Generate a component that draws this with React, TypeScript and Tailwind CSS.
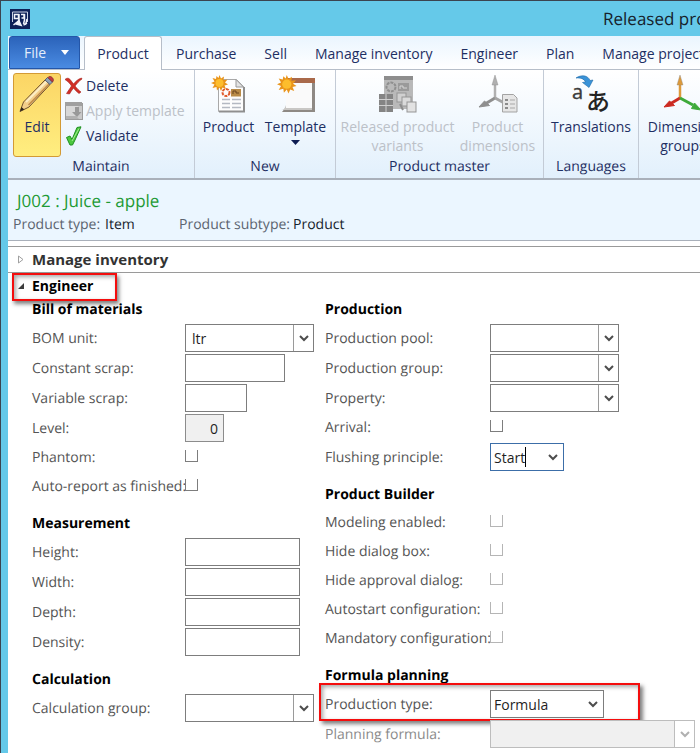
import type { ReactNode } from "react";

const TABS = ["Purchase", "Sell", "Manage inventory", "Engineer", "Plan", "Manage projects"];

function AppLogo() {
  return (
    <svg width="20" height="20" viewBox="0 0 20 20">
      <rect width="20" height="20" fill="#0e2158" />
      <path d="M2.500 13V3h15v10" fill="none" stroke="#c9d1e4" strokeWidth="1" />
      <path d="M4.500 5.500h4v4h-4zM9 5v6.500L3.500 16" fill="none" stroke="#f0f3fa" strokeWidth="1.500" />
      <path d="M9 10l3.500 7.500L5 15.500z" fill="#f0f3fa" />
      <path d="M11 5.500h3v3.500h-2.500M14.500 5v6l-1 4M17 10l-1.500 6M13.500 16l3.500-2" fill="none" stroke="#f0f3fa" strokeWidth="1.500" />
    </svg>
  );
}

function PencilIcon() {
  return (
    <svg width="38" height="38" viewBox="0 0 38 38">
      <path d="M2 36.500L5.500 27 27 5l5 4.500L11 32z" fill="#f3cf8b" stroke="#70532f" />
      <path d="M8 27L28.500 6.500" stroke="#fdeec6" strokeWidth="2" />
      <path d="M10.500 30L31 9" stroke="#c08a4a" strokeWidth="1.500" />
      <path d="M27 5l2.500-2.500 5 4.500L32 9.500z" fill="#8fa0b4" stroke="#5b6472" />
      <path d="M30 2.500C32-.5 37.500 4 34.500 7z" fill="#c63a3d" stroke="#7d2c30" strokeWidth=".8" />
      <path d="M2 36.500l1.500-4.500 2.800 2.500z" fill="#30261c" />
    </svg>
  );
}

function DeleteIcon() {
  return (
    <svg width="18" height="18" viewBox="0 0 18 18">
      <path d="M0 2.500C2 .5 4 1 5.500 3L8.500 7c2-2.500 4.500-5 8-6l.5 1C14 4 12 6.500 10 9c2 2.500 4 4.500 6 6l-2 1.500c-2-1.500-4-3.500-5.500-5.500-1.500 2-3 4-4 6L1.500 16.500C3 14 5 11.500 6.500 9 5 6.500 3 4.500 0 2.500z" fill="#d12f26" stroke="#a51e19" strokeWidth=".6" />
    </svg>
  );
}

function ApplyTemplateIcon() {
  return (
    <svg width="18" height="18" viewBox="0 0 18 18">
      <rect x=".5" y="1.500" width="17" height="16" fill="#c9c9c9" stroke="#9c9c9c" />
      <rect x="0" y="0" width="17" height="4" fill="#a0a0a0" />
      <rect x="1" y="4" width="12" height="10" fill="#d8d8d8" />
      <path d="M10 5h4v5h2.500L12 15l-5-5h3z" fill="#999" />
      <path d="M1 17v-3h10l3 3z" fill="#b2b2b2" />
    </svg>
  );
}

function ValidateIcon() {
  return (
    <svg width="18" height="20" viewBox="0 0 18 20">
      <path d="M1.500 11.500l3.500-1.500 2 3.500L12 1.500 16 .8 10 14l-2.500 5H5z" fill="#4cc83f" stroke="#1f8f22" />
      <path d="M7 15L14 2.500" stroke="#a5ee90" />
    </svg>
  );
}

function Burst() {
  return (
    <g>
      <path d="M8.500 0l1.500 3.500 3-2-.5 3.500 4-.5-2.500 3 3 2-3.500 1 1.500 3.500-3.500-1.500L10 16l-1.500-3.500L6 15.500l-.5-3.500-4 1 2-3.500L0 8l3.500-1.500L1.500 3 5 4l.5-3L7.500 3z" fill="#e9941a" />
      <circle cx="8.500" cy="8" r="4" fill="#fdbd2c" />
    </g>
  );
}

function NewProductIcon() {
  return (
    <svg width="36" height="38" viewBox="0 0 36 38">
      <path d="M7.500 4.500h18l7 7v25h-25z" fill="#fdfdfd" stroke="#a9a9a9" />
      <path d="M8 36.500h25V12" fill="none" stroke="#8f8f8f" strokeWidth="2" />
      <path d="M25 4.500v7.500h7.500z" fill="#e3e3e3" stroke="#999" />
      <circle cx="15" cy="17.500" r="3.500" fill="none" stroke="#df5a2b" strokeWidth="2" strokeDasharray="3 1" />
      <rect x="20" y="14" width="10" height="7.500" fill="#b98b48" />
      <path d="M22 19v-3h3v2h3" fill="none" stroke="#684520" />
      <path d="M11 24.500h8M21 24.500h9M11 28.500h8M21 28.500h9M11 32.500h8M21 32.500h9" stroke="#b4b9c2" strokeWidth="1.500" />
      <Burst />
    </svg>
  );
}

function TemplateIcon() {
  return (
    <svg width="40" height="38" viewBox="0 0 40 38">
      <path d="M10 4h29v33H6l4-5z" fill="#8e8984" />
      <rect x="10" y="3" width="29" height="5" fill="#a9694a" />
      <path d="M10 8h26v25H10z" fill="#fafafa" />
      <path d="M5 35c3 0 4-2 5-5v3h26v2z" fill="#c9c7c4" />
      <g transform="translate(1 0) scale(1.150)">
        <Burst />
      </g>
    </svg>
  );
}

function VariantsIcon() {
  return (
    <svg width="40" height="38" viewBox="0 0 40 38">
      <rect x="6" y="1" width="29" height="33" fill="#b9b9b9" />
      <rect x="6" y="1" width="29" height="4" fill="#8d8d8d" />
      <circle cx="13" cy="12" r="4.500" fill="none" stroke="#8f8f8f" strokeWidth="2" strokeDasharray="3 1" />
      <rect x="20" y="8" width="11" height="8" fill="#9a9a9a" />
      <path d="M22 14v-3h3v2h4" fill="none" stroke="#d5d5d5" />
      <rect x="1" y="19" width="14" height="18" fill="#848484" />
      <path d="M1 24.500h14M1 30.500h14M8 19v18" stroke="#cfcfcf" />
      <rect x="19" y="18" width="9" height="9" fill="#d0d0d0" stroke="#959595" />
      <rect x="24" y="22" width="9" height="9" fill="#dadada" stroke="#959595" />
      <rect x="29" y="27" width="9" height="10" fill="#e2e2e2" stroke="#959595" />
      <path d="M22 29l3 6" stroke="#8d8d8d" strokeWidth="2" />
    </svg>
  );
}

type AxesProps = { up: string; left: string; right: string; list?: boolean };

function AxesIcon({ up, left, right, list }: AxesProps) {
  return (
    <svg width="40" height="38" viewBox="0 0 40 38">
      <path d="M17 24V8" stroke={up} strokeWidth="2.500" />
      <path d="M17 0l3 10h-6z" fill={up} stroke="#8b8b8b" strokeWidth=".4" />
      <path d="M17 23L7 29" stroke={left} strokeWidth="3" />
      <path d="M1 32l5.500-6 5 4.500z" fill={left} stroke={left} />
      <path d="M17 23l13 7" stroke={right} strokeWidth="3" />
      <path d="M38 35l-9.500-1.500 3-5.500z" fill={right} stroke={right} />
      {list && (
        <g>
          <path d="M24.500 19.500h11l3.500 3.500v14H24.500z" fill="#e6e6e6" stroke="#a3a3a3" />
          <path d="M27 25h3M27 29h3M27 33h3" stroke="#8b8b8b" strokeWidth="2" />
          <path d="M32 25h5M32 29h5M32 33h5" stroke="#a8a8a8" />
        </g>
      )}
    </svg>
  );
}

function TranslationsIcon() {
  return (
    <svg width="40" height="38" viewBox="0 0 40 38">
      <text x="1" y="24" fontSize="20" fill="#3c3c3c" stroke="#3c3c3c" strokeWidth=".4" fontFamily="'Open Sans', sans-serif">a</text>
      <text x="15" y="35" fontSize="24" fontWeight="500" fill="#242424" fontFamily="'Noto Sans CJK JP', sans-serif">あ</text>
      <path d="M5 3C10-.5 17 0 19 5.500l3-.5-4 7.500-6.500-5 3-.5C13 3.500 9 2.500 5 3z" fill="#3a93d8" stroke="#1f6aa8" strokeWidth=".6" />
    </svg>
  );
}

function RibbonGroup({ label, className, children }: { label: string; className: string; children: ReactNode }) {
  return (
    <section className={`flex shrink-0 flex-col border-r border-[#c3cbd6] ${className}`}>
      <div className="flex h-[87px]">{children}</div>
      <h2 className="text-center leading-5">{label}</h2>
    </section>
  );
}

type BigButtonProps = { icon: ReactNode; lines: string[]; className: string; disabled?: boolean; menu?: boolean };

function BigButton({ icon, lines, className, disabled, menu }: BigButtonProps) {
  return (
    <button
      disabled={disabled}
      className={`flex shrink-0 flex-col items-center pt-[5px] disabled:text-[#bcc1c8] ${className}`}
    >
      {icon}
      <span className="mt-1 flex flex-col whitespace-nowrap leading-[19px]">
        {lines.map((line) => (
          <span key={line}>{line}</span>
        ))}
      </span>
      {menu && (
        <svg className="mt-1" width="9" height="5" viewBox="0 0 9 5">
          <path d="M0 0h9L4.500 5z" fill="#0d1c52" />
        </svg>
      )}
    </button>
  );
}

function SmallButton({ icon, label, disabled }: { icon: ReactNode; label: string; disabled?: boolean }) {
  return (
    <button disabled={disabled} className="flex h-[25px] items-center gap-[3px] whitespace-nowrap disabled:text-[#bcc1c8]">
      <span className="w-[18px]">{icon}</span>
      {label}
    </button>
  );
}

function FieldGroup({ title, children }: { title: string; children: ReactNode }) {
  return (
    <fieldset className="mb-[10px]">
      <legend className="h-[26px] font-bold leading-[26px] text-black">{title}</legend>
      {children}
    </fieldset>
  );
}

type RowProps = { id: string; label: string; labelWidth: string; dim?: boolean; short?: boolean; children: ReactNode };

function Row({ id, label, labelWidth, dim, short, children }: RowProps) {
  return (
    <div className={`flex items-center ${short ? "h-[29px]" : "h-[30px]"}`}>
      <label htmlFor={id} className={`shrink-0 whitespace-nowrap ${labelWidth} ${dim ? "text-[#8a8a8a]" : "text-[#555555]"}`}>
        {label}
      </label>
      {children}
    </div>
  );
}

const LEFT = "w-[153px]";
const RIGHT = "w-[165px]";

function TextField({ id, label, width }: { id: string; label: string; width: string }) {
  return (
    <Row id={id} label={label} labelWidth={LEFT}>
      <input id={id} type="text" className={`h-[28px] border border-[#7d7d7d] bg-white px-1.5 ${width}`} />
    </Row>
  );
}

function CheckField({ id, label, labelWidth, dim }: { id: string; label: string; labelWidth: string; dim?: boolean }) {
  return (
    <Row id={id} label={label} labelWidth={labelWidth} short>
      <input
        id={id}
        type="checkbox"
        className={`mb-[3px] h-3 w-[13px] shrink-0 appearance-none border border-t-0 bg-white ${
          dim ? "border-[#b5b5b5]" : "border-[#7d7d7d]"
        }`}
      />
    </Row>
  );
}

type SelectFieldProps = {
  id: string;
  label: string;
  labelWidth: string;
  width: string;
  value?: string;
  split?: boolean;
  focused?: boolean;
  disabled?: boolean;
};

function SelectField({ id, label, labelWidth, width, value = "", split, focused, disabled }: SelectFieldProps) {
  const border = focused ? "border-[#3c6ea8]" : disabled ? "border-[#bdbdbd]" : "border-[#7d7d7d]";
  return (
    <Row id={id} label={label} labelWidth={labelWidth} dim={disabled}>
      <div className={`relative h-[28px] shrink-0 ${width}`}>
        <select
          id={id}
          defaultValue={value}
          disabled={disabled}
          className={`h-full w-full appearance-none border text-[#1f1f1f] outline-none ${border} ${
            disabled ? "bg-[#f0f0f0]" : "bg-white"
          } ${split ? "pl-1.5" : "pl-[3px]"}`}
        >
          <option value={value}>{value}</option>
        </select>
        {focused && <span className="absolute left-[35px] top-1 h-5 w-px bg-black" />}
        <span
          className={`pointer-events-none absolute inset-y-px right-px flex w-5 items-center justify-center ${
            split ? "border-l bg-white" : ""
          } ${disabled ? "border-[#bdbdbd] text-[#b0b0b0]" : "border-[#9a9a9a] text-[#4d4d4d]"}`}
        >
          <svg width="10" height="7" viewBox="0 0 10 7">
            <path d="M1 1l4 4 4-4" fill="none" stroke="currentColor" strokeWidth="2" />
          </svg>
        </span>
      </div>
    </Row>
  );
}

export default function App() {
  return (
    <div className="min-h-screen overflow-hidden border-l border-t border-[#3b4450] bg-[#65c9e9] pl-[7px] font-['Open_Sans','Segoe_UI',sans-serif] text-[14px] text-[#1e2f63] [text-rendering:geometricPrecision]">
      <header className="flex h-[35px] items-center justify-between pl-[2px]">
        <AppLogo />
        <h1 className="w-[97px] whitespace-nowrap text-[17px] text-[#16222c]">Released product</h1>
      </header>

      <nav className="flex h-[34px] items-end border-b border-[#b6bec9] bg-gradient-to-b from-[#eaf5fe] to-white">
        <button className="ml-px flex h-[33px] w-[71px] shrink-0 items-center justify-between rounded-t-[3px] border border-[#2456a8] bg-gradient-to-b from-[#2b63ba] to-[#4a8be2] pl-[14px] pr-[10px] text-[#e4eefb]">
          File
          <svg width="8" height="5" viewBox="0 0 8 5">
            <path d="M0 0h8L4 5z" fill="#fff" />
          </svg>
        </button>
        <button className="-mb-px ml-1 h-[34px] w-[78px] shrink-0 rounded-t-[3px] border border-b-0 border-[#b6bec9] bg-white">
          Product
        </button>
        {TABS.map((tab) => (
          <button key={tab} className="h-8 shrink-0 whitespace-nowrap px-[14px]">
            {tab}
          </button>
        ))}
      </nav>

      <div className="flex h-[110px] border-b-2 border-[#a9b0ba] bg-gradient-to-b from-white to-[#e2f0fc]">
        <RibbonGroup label="Maintain" className="w-[187px]">
          <div className="flex flex-1 gap-1 pl-[5px] pt-[3px]">
            <button className="flex h-[84px] w-12 shrink-0 flex-col items-center rounded-[3px] border border-[#d39a35] bg-gradient-to-b from-[#fbd565] to-[#ffee80] pt-px">
              <PencilIcon />
              <span className="mt-1 leading-[19px]">Edit</span>
            </button>
            <div className="flex flex-col">
              <SmallButton icon={<DeleteIcon />} label="Delete" />
              <SmallButton icon={<ApplyTemplateIcon />} label="Apply template" disabled />
              <SmallButton icon={<ValidateIcon />} label="Validate" />
            </div>
          </div>
        </RibbonGroup>
        <RibbonGroup label="New" className="w-[141px]">
          <BigButton icon={<NewProductIcon />} lines={["Product"]} className="w-[67px]" />
          <BigButton icon={<TemplateIcon />} lines={["Template"]} className="w-[67px]" menu />
        </RibbonGroup>
        <RibbonGroup label="Product master" className="w-[208px]">
          <BigButton icon={<VariantsIcon />} lines={["Released product", "variants"]} className="w-[123px]" disabled />
          <BigButton
            icon={<AxesIcon up="#b0b0b0" left="#8f8f8f" right="#a5a5a5" list />}
            lines={["Product", "dimensions"]}
            className="w-[77px]"
            disabled
          />
        </RibbonGroup>
        <RibbonGroup label="Languages" className="w-[95px]">
          <BigButton icon={<TranslationsIcon />} lines={["Translations"]} className="w-[94px]" />
        </RibbonGroup>
        <div className="flex shrink-0">
          <BigButton
            icon={<AxesIcon up="#dd9a3a" left="#cc2b22" right="#3daa3a" />}
            lines={["Dimension", "groups"]}
            className="w-[88px]"
          />
        </div>
      </div>

      <div className="h-[61px] border-b border-[#a9b0ba] bg-[#ebf6ff] px-[5px] pt-2">
        <h2 className="pl-1 text-[17px] leading-[25px] text-[#1e9a35]">J002 : Juice - apple</h2>
        <dl className="flex leading-6 text-[#5c6470]">
          <dt className="w-[92px] whitespace-nowrap">Product type:</dt>
          <dd className="w-[74px] text-[#16222c]">Item</dd>
          <dt className="w-[114px] whitespace-nowrap">Product subtype:</dt>
          <dd className="text-[#16222c]">Product</dd>
        </dl>
      </div>

      <main className="min-h-[512px] bg-white pt-[5px]">
        <button className="flex h-[27px] w-full items-center gap-2 border-y border-[#9a9a9a] pl-2 text-[15px] font-bold text-[#333333]">
          <svg width="8" height="9" viewBox="0 0 8 9">
            <path d="M2.500 1v7L7 4.500z" fill="#fff" stroke="#a0a0a0" />
          </svg>
          Manage inventory
        </button>
        <div className="relative">
          <button className="flex h-6 w-full items-center gap-2 pl-2 font-bold text-black">
            <svg width="8" height="9" viewBox="0 0 8 9">
              <path d="M8 2v6H2z" fill="#3c3c3c" />
            </svg>
            Engineer
          </button>
          <div className="pointer-events-none absolute left-1 top-0 h-7 w-[105px] border-2 border-[#f40d0d] shadow-[2px_3px_4px_rgba(0,0,0,0.5),inset_2px_2px_4px_rgba(0,0,0,0.35)]" />
        </div>

        <div className="flex pl-6">
          <div className="w-[293px] shrink-0">
            <FieldGroup title="Bill of materials">
              <SelectField id="bom-unit" label="BOM unit:" labelWidth={LEFT} width="w-[129px]" value="ltr" split />
              <TextField id="constant-scrap" label="Constant scrap:" width="w-[100px]" />
              <TextField id="variable-scrap" label="Variable scrap:" width="w-[62px]" />
              <Row id="level" label="Level:" labelWidth={LEFT}>
                <input
                  id="level"
                  type="text"
                  readOnly
                  value="0"
                  className="h-[28px] w-[39px] border border-[#8c8c8c] bg-[#f0f0f0] px-[5px] text-right text-[#1f1f1f]"
                />
              </Row>
              <CheckField id="phantom" label="Phantom:" labelWidth={LEFT} />
              <CheckField id="auto-report" label="Auto-report as finished:" labelWidth={LEFT} />
            </FieldGroup>
            <FieldGroup title="Measurement">
              <TextField id="height" label="Height:" width="w-[115px]" />
              <TextField id="width" label="Width:" width="w-[115px]" />
              <TextField id="depth" label="Depth:" width="w-[115px]" />
              <TextField id="density" label="Density:" width="w-[115px]" />
            </FieldGroup>
            <FieldGroup title="Calculation">
              <SelectField id="calc-group" label="Calculation group:" labelWidth={LEFT} width="w-[129px]" split />
            </FieldGroup>
          </div>

          <div className="flex-1">
            <FieldGroup title="Production">
              <SelectField id="pool" label="Production pool:" labelWidth={RIGHT} width="w-[129px]" split />
              <SelectField id="group" label="Production group:" labelWidth={RIGHT} width="w-[129px]" split />
              <SelectField id="property" label="Property:" labelWidth={RIGHT} width="w-[129px]" split />
              <CheckField id="arrival" label="Arrival:" labelWidth={RIGHT} />
              <SelectField id="flushing" label="Flushing principle:" labelWidth={RIGHT} width="w-[74px]" value="Start" focused />
            </FieldGroup>
            <FieldGroup title="Product Builder">
              <CheckField id="modeling" label="Modeling enabled:" labelWidth={RIGHT} dim />
              <CheckField id="hide-dialog" label="Hide dialog box:" labelWidth={RIGHT} dim />
              <CheckField id="hide-approval" label="Hide approval dialog:" labelWidth={RIGHT} dim />
              <CheckField id="autostart" label="Autostart configuration:" labelWidth={RIGHT} dim />
              <CheckField id="mandatory" label="Mandatory configuration:" labelWidth={RIGHT} dim />
            </FieldGroup>
            <FieldGroup title="Formula planning">
              <div className="relative">
                <SelectField id="production-type" label="Production type:" labelWidth={RIGHT} width="w-[114px]" value="Formula" />
                <div className="pointer-events-none absolute -left-1.5 top-[-6px] h-[38px] w-[321px] border-2 border-[#f40d0d] shadow-[3px_3px_4px_rgba(0,0,0,0.5),inset_2px_2px_4px_rgba(0,0,0,0.35)]" />
              </div>
              <SelectField id="planning-formula" label="Planning formula:" labelWidth={RIGHT} width="w-[205px]" split disabled />
            </FieldGroup>
          </div>
        </div>
      </main>
    </div>
  );
}
